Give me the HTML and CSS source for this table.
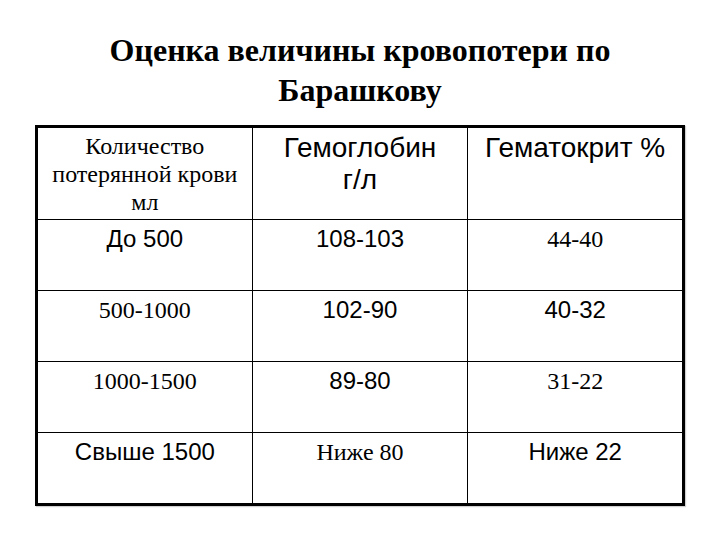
FILE: index.html
```html
<!DOCTYPE html>
<html lang="ru">
<head>
<meta charset="utf-8">
<title>Оценка величины кровопотери по Барашкову</title>
<link rel="stylesheet" href="styles.css">
</head>
<body>
<div class="slide">
  <h1 class="title">Оценка величины кровопотери по<br>Барашкову</h1>
  <table class="grid">
    <tr class="head">
      <td class="serif">Количество<br>потерянной крови<br>мл</td>
      <td class="sans big">Гемоглобин<br>г/л</td>
      <td class="sans big">Гематокрит %</td>
    </tr>
    <tr class="row">
      <td class="sans">До 500</td>
      <td class="sans">108-103</td>
      <td class="serif">44-40</td>
    </tr>
    <tr class="row">
      <td class="serif">500-1000</td>
      <td class="sans">102-90</td>
      <td class="sans">40-32</td>
    </tr>
    <tr class="row">
      <td class="serif">1000-1500</td>
      <td class="sans">89-80</td>
      <td class="serif">31-22</td>
    </tr>
    <tr class="row">
      <td class="sans">Свыше 1500</td>
      <td class="serif">Ниже 80</td>
      <td class="sans">Ниже 22</td>
    </tr>
  </table>
</div>
</body>
</html>
```
FILE: styles.css
```css
html, body {
  margin: 0;
  padding: 0;
  background: #ffffff;
}
.slide {
  width: 720px;
  height: 540px;
  padding-top: 30px;
  box-sizing: border-box;
}
.title {
  margin: 0;
  font-family: "Liberation Serif", "Times New Roman", serif;
  font-weight: bold;
  font-size: 32px;
  line-height: 40px;
  text-align: center;
  color: #000;
}
.grid {
  margin: 15px 0 0 35px;
  width: 650px;
  border-collapse: collapse;
  table-layout: fixed;
  border: 3px solid #000;
  box-shadow: 1px 1px 1px #d0d0d0;
}
.grid td {
  border: 1px solid #000;
  text-align: center;
  vertical-align: top;
  color: #000;
  padding: 0;
}
.head td {
  height: 87px;
  padding-top: 4px;
}
.row td {
  height: 65px;
  padding-top: 5px;
}
.serif {
  font-family: "Liberation Serif", "Times New Roman", serif;
  font-size: 24px;
  line-height: 28px;
}
.sans {
  font-family: "Liberation Sans", Arial, sans-serif;
  font-size: 24px;
  line-height: 28px;
}
.big {
  font-size: 28px;
  line-height: 32px;
  padding-top: 6px;
}
```
